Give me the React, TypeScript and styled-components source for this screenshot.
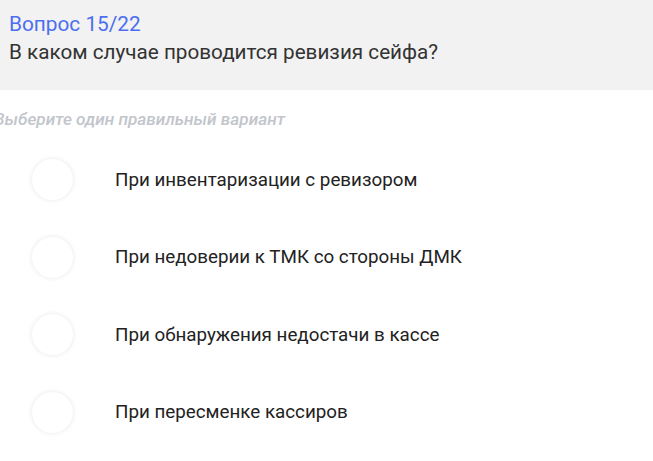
import React from "react";
import styled, { createGlobalStyle } from "styled-components";

const Global = createGlobalStyle`
  html, body { margin: 0; padding: 0; background: #ffffff; }
  body { font-family: Roboto, "Noto Sans", sans-serif; overflow: hidden; }
`;

const Page = styled.div`
  width: 653px;
  height: 461px;
  background: #ffffff;
  overflow: hidden;
`;

const Header = styled.header`
  background: #f2f2f2;
  height: 90px;
  box-sizing: border-box;
  padding: 11px 9px 0;
  display: flex;
  flex-direction: column;
  gap: 2px;
`;

const Counter = styled.div`
  color: #4c6ef0;
  font-size: 20.8px;
  line-height: 26px;
`;

const Question = styled.div`
  color: #333333;
  font-size: 20.7px;
  line-height: 26px;
`;

const Hint = styled.div`
  margin: 19px 0 0 -6px;
  color: #c2c5cb;
  font-size: 17.2px;
  font-weight: 500;
  font-style: italic;
  line-height: 20px;
`;

const Options = styled.ul`
  list-style: none;
  margin: 30px 0 0;
  padding: 0 0 0 32px;
  display: flex;
  flex-direction: column;
  gap: 36.5px;
`;

const Option = styled.li`
  display: flex;
  align-items: center;
  gap: 42px;
  height: 41px;
`;

const Radio = styled.span`
  flex: none;
  width: 41px;
  height: 41px;
  border-radius: 50%;
  background: #ffffff;
  box-shadow: 0 0 4px 1px rgba(0, 0, 0, 0.07);
`;

const Label = styled.span`
  color: #222222;
  font-size: 18.8px;
`;

const answers = [
  "При инвентаризации с ревизором",
  "При недоверии к ТМК со стороны ДМК",
  "При обнаружения недостачи в кассе",
  "При пересменке кассиров",
];

export default function App() {
  return (
    <Page>
      <Global />
      <Header>
        <Counter>Вопрос 15/22</Counter>
        <Question>В каком случае проводится ревизия сейфа?</Question>
      </Header>
      <Hint>Выберите один правильный вариант</Hint>
      <Options>
        {answers.map((a) => (
          <Option key={a}>
            <Radio />
            <Label>{a}</Label>
          </Option>
        ))}
      </Options>
    </Page>
  );
}
